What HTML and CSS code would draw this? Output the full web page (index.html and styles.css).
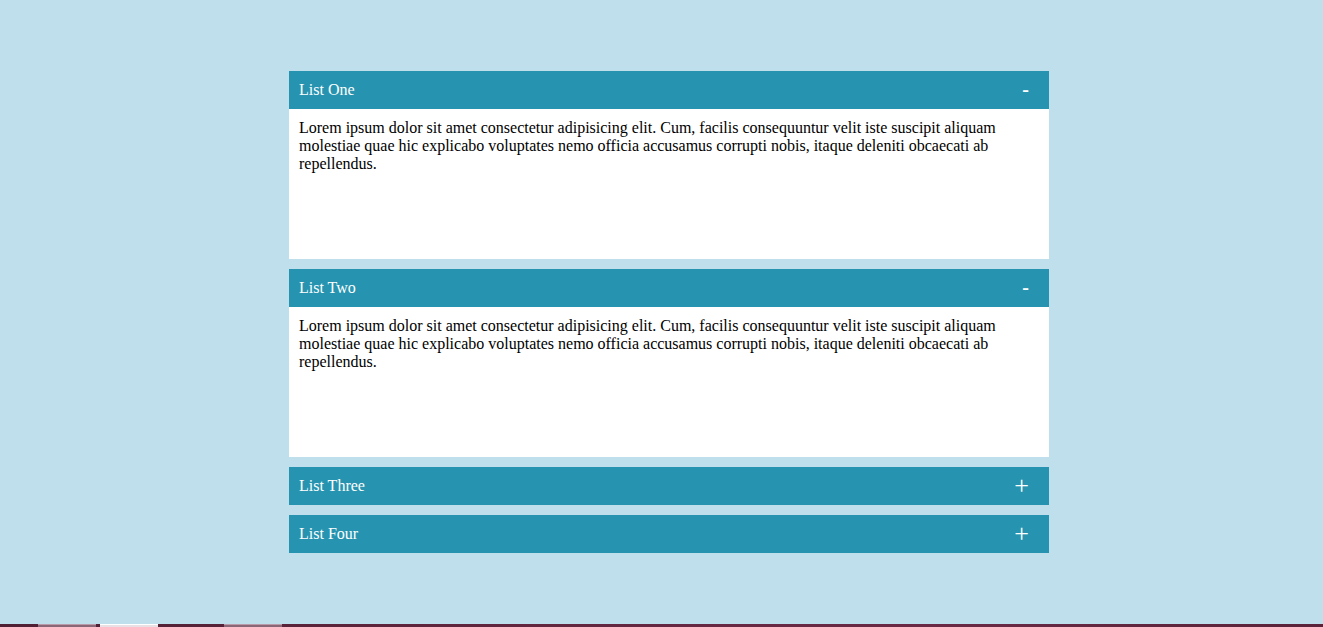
FILE: index.html
```html
<!DOCTYPE html>
<html lang="en">
<head>
<meta charset="utf-8">
<title>Accordion</title>
<link rel="stylesheet" href="styles.css">
</head>
<body>
<div class="page">
  <div class="accordion">
    <div class="item">
      <div class="head"><span class="title">List One</span><span class="toggle minus">-</span></div>
      <div class="body">Lorem ipsum dolor sit amet consectetur adipisicing elit. Cum, facilis consequuntur velit iste suscipit aliquam molestiae quae hic explicabo voluptates nemo officia accusamus corrupti nobis, itaque deleniti obcaecati ab repellendus.</div>
    </div>
    <div class="item">
      <div class="head"><span class="title">List Two</span><span class="toggle minus">-</span></div>
      <div class="body">Lorem ipsum dolor sit amet consectetur adipisicing elit. Cum, facilis consequuntur velit iste suscipit aliquam molestiae quae hic explicabo voluptates nemo officia accusamus corrupti nobis, itaque deleniti obcaecati ab repellendus.</div>
    </div>
    <div class="item">
      <div class="head"><span class="title">List Three</span><span class="toggle plus">+</span></div>
    </div>
    <div class="item">
      <div class="head"><span class="title">List Four</span><span class="toggle plus">+</span></div>
    </div>
  </div>
  <div class="taskbar">
    <span class="tab tab1"></span>
    <span class="tab tab2"></span>
    <span class="tab tab3"></span>
  </div>
</div>
</body>
</html>
```
FILE: styles.css
```css
html, body {
  margin: 0;
  padding: 0;
}
body {
  background: #bedfeb;
  font-family: "Liberation Serif", "Times New Roman", serif;
  font-size: 16px;
  color: #000;
}
.page {
  height: 627px;
  display: flex;
  flex-direction: column;
  overflow: hidden;
}
.accordion {
  width: 760px;
  margin: 71px 0 0 289px;
  display: flex;
  flex-direction: column;
  gap: 10px;
}
.head {
  background: #2694b0;
  color: #fff;
  height: 38px;
  padding: 0 20px 0 10px;
  display: flex;
  align-items: center;
  justify-content: space-between;
  box-sizing: border-box;
}
.title {
  line-height: 18px;
}
.toggle {
  line-height: 1;
}
.minus {
  font-size: 20px;
  font-weight: bold;
  margin-top: -2px;
}
.plus {
  font-size: 26px;
  margin-top: 0;
}
.body {
  background: #fff;
  height: 150px;
  box-sizing: border-box;
  padding: 10px 10px;
  line-height: 18px;
}
.taskbar {
  margin-top: auto;
  height: 3px;
  background: linear-gradient(90deg, #4f1f33 0%, #62263f 40%, #6a2a46 70%, #5a2339 100%);
  display: flex;
  flex-shrink: 0;
}
.tab {
  height: 3px;
  width: 58px;
  background: #8a6676;
  box-sizing: border-box;
  border-top: 1px solid #b99aa8;
}
.tab1 { margin-left: 38px; }
.tab2 { margin-left: 4px; background: #e8e0e4; border-top-color: #fff; }
.tab3 { margin-left: 66px; }
```
